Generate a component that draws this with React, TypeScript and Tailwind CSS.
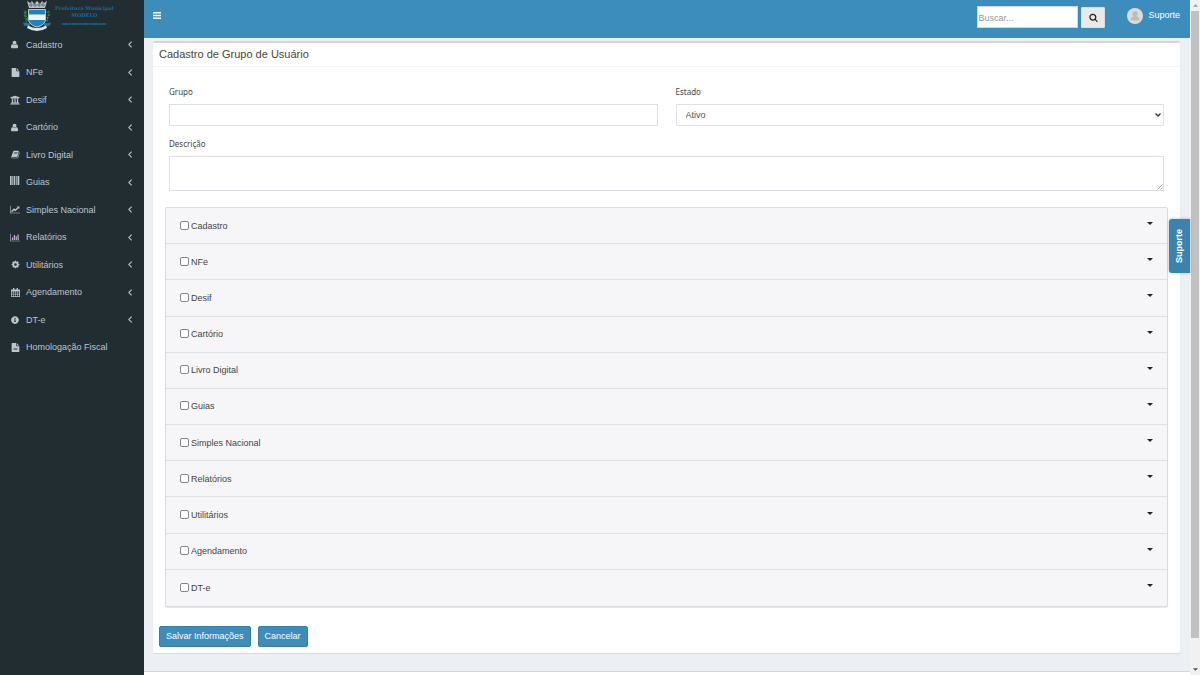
import type { ReactNode } from "react";
import { FaInfoCircle, FaUniversity } from "react-icons/fa";

const FA = {
  user: "M1408 1405q0 120-73 189.5t-194 69.5h-874q-121 0-194-69.5t-73-189.5q0-53 3.5-103.5t14-109 26.5-108.5 43-97.5 62-81 85.5-53.5 111.5-20q9 0 42 21.5t74.5 48 108 48 133.5 21.5 133.5-21.5 108-48 74.5-48 42-21.5q61 0 111.5 20t85.5 53.5 62 81 43 97.5 26.5 108.5 14 109 3.5 103.5zm-320-893q0 159-112.5 271.5t-271.5 112.5-271.5-112.5-112.5-271.5 112.5-271.5 271.5-112.5 271.5 112.5 112.5 271.5z",
  file: "M1152 512v-472q22 14 36 28l408 408q14 14 28 36h-472zm-128 32q0 40 28 68t68 28h544v1056q0 40-28 68t-68 28h-1344q-40 0-68-28t-28-68v-1600q0-40 28-68t68-28h800v544z",
  fileText:
    "M1596 476q14 14 28 36h-472v-472q22 14 36 28zm-476 164h544v1056q0 40-28 68t-68 28h-1344q-40 0-68-28t-28-68v-1600q0-40 28-68t68-28h800v544q0 40 28 68t68 28zm160 736v-64q0-14-9-23t-23-9h-704q-14 0-23 9t-9 23v64q0 14 9 23t23 9h704q14 0 23-9t9-23zm0-256v-64q0-14-9-23t-23-9h-704q-14 0-23 9t-9 23v64q0 14 9 23t23 9h704q14 0 23-9t9-23z",
  book: "M1703 478q40 57 18 129l-275 906q-19 64-76.5 107.5t-122.5 43.5h-923q-77 0-148.5-53.5t-99.5-131.5q-24-67-2-127 0-4 3-27t4-37q1-8-3-21.5t-3-19.5q2-11 8-21t16.5-23.5 16.5-23.5q23-38 45-91.5t30-91.5q3-10 .5-30t-.5-28q3-11 17-28t17-23q21-36 42-92t25-90q1-9-2.5-32t.5-28q4-13 22-30.5t22-22.5q19-26 42.5-84.5t27.5-96.5q1-8-3-25.5t-2-26.5q2-8 9-18t18-23 17-21q8-12 16.5-30.5t15-35 16-36 19.5-32 26.5-23.5 36-11.5 47.5 5.5l-1 3q38-9 51-9h761q74 0 114 56t18 130l-274 906q-36 119-71.5 153.5t-128.5 34.5h-869q-27 0-38 15-11 16-1 43 24 70 144 70h923q29 0 56-15.5t35-41.5l300-987q7-22 5-57 38 15 59 43zm-1064 2q-4 13 2 22.5t20 9.5h608q13 0 25.5-9.5t16.5-22.5l21-64q4-13-2-22.5t-20-9.5h-608q-13 0-25.5 9.5t-16.5 22.5zm-83 256q-4 13 2 22.5t20 9.5h608q13 0 25.5-9.5t16.5-22.5l21-64q4-13-2-22.5t-20-9.5h-608q-13 0-25.5 9.5t-16.5 22.5z",
  lineChart:
    "M2048 1536v128h-2048v-1536h128v1408h1920zm-128-1248v435q0 21-19.5 29.5t-35.5-7.5l-121-121-633 633q-10 10-23 10t-23-10l-233-233-416 416-192-192 585-585q10-10 23-10t23 10l233 233 464-464-121-121q-16-16-7.5-35.5t29.5-19.5h435q14 0 23 9t9 23z",
  barChart:
    "M640 896v512h-256v-512h256zm384-512v1024h-256v-1024h256zm1024 1152v128h-2048v-1536h128v1408h1920zm-640-896v768h-256v-768h256zm384-384v1152h-256v-1152h256z",
  cog: "M1152 896q0-106-75-181t-181-75-181 75-75 181 75 181 181 75 181-75 75-181zm512-109v222q0 12-8 23t-20 13l-185 28q-19 54-39 91 35 50 107 138 10 12 10 25t-9 23q-27 37-99 108t-94 71q-12 0-26-9l-138-108q-44 23-91 38-16 136-29 186-7 28-36 28h-222q-14 0-24.5-8.5t-11.5-21.5l-28-184q-49-16-90-37l-141 107q-10 9-25 9-14 0-25-11-126-114-165-168-7-10-7-23 0-12 8-23 15-21 51-66.5t54-70.5q-27-50-41-99l-183-27q-13-2-21-12.5t-8-23.5v-222q0-12 8-23t19-13l186-28q14-46 39-92-40-57-107-138-10-12-10-24 0-10 9-23 26-36 98.5-107.5t94.5-71.5q13 0 26 10l138 107q44-23 91-38 16-136 29-186 7-28 36-28h222q14 0 24.5 8.5t11.5 21.5l28 184q49 16 90 37l142-107q9-9 24-9 13 0 25 10 129 119 165 170 7 8 7 22 0 12-8 23-15 21-51 66.5t-54 70.5q26 50 41 98l183 28q13 2 21 12.5t8 23.5z",
  search:
    "M1216 832q0-185-131.5-316.5t-316.5-131.5-316.5 131.5-131.5 316.5 131.5 316.5 316.5 131.5 316.5-131.5 131.5-316.5zm512 832q0 52-38 90t-90 38q-54 0-90-38l-343-342q-179 124-399 124-143 0-273.5-55.5t-225-150-150-225-55.5-273.5 55.5-273.5 150-225 225-150 273.5-55.5 273.5 55.5 225 150 150 225 55.5 273.5q0 220-124 399l343 343q37 37 37 90z",
  angleLeft:
    "M1203 544q0 13-10 23l-393 393 393 393q10 10 10 23t-10 23l-50 50q-10 10-23 10t-23-10l-466-466q-10-10-10-23t10-23l466-466q10-10 23-10t23 10l50 50q10 10 10 23z",
};

function Icon({ d, box = "0 0 1792 1792", className = "h-[9px]" }: { d: string; box?: string; className?: string }) {
  return (
    <svg viewBox={box} className={className} fill="currentColor" aria-hidden="true">
      <path d={d} />
    </svg>
  );
}

const Barcode = () => (
  <svg viewBox="0 0 10 9" className="mb-1 h-[9px] w-[10px]" fill="currentColor" aria-hidden="true">
    <path d="M0 0h1.600v9H0zM2.200 0h.7v9h-.7zM3.600 0h1.600v9H3.600zM5.900 0h.8v9h-.8zM7.500 0h1.800v9H7.500z" />
  </svg>
);

const Calendar = () => (
  <svg viewBox="0 0 18 18" className="h-[9px] w-[9px]" fill="currentColor" aria-hidden="true">
    <path
      fillRule="evenodd"
      d="M1 3h3V1q0-1 1-1h1q1 0 1 1v2h4V1q0-1 1-1h1q1 0 1 1v2h3q1 0 1 1v13q0 1-1 1H1q-1 0-1-1V4q0-1 1-1zM1.400 7v2.600h3V7zM5.400 7v2.600h3V7zM9.400 7v2.600h3V7zM13.400 7v2.600h3V7zM1.400 10.600v2.600h3v-2.600zM5.400 10.600v2.600h3v-2.600zM9.400 10.600v2.600h3v-2.600zM13.400 10.600v2.600h3v-2.600zM1.400 14.200v2.400h3v-2.400zM5.400 14.200v2.400h3v-2.400zM9.400 14.200v2.400h3v-2.400zM13.400 14.200v2.400h3v-2.400z"
    />
  </svg>
);

const menu: { label: string; icon: ReactNode; leaf?: boolean }[] = [
  { label: "Cadastro", icon: <Icon d={FA.user} box="0 0 1408 1792" /> },
  { label: "NFe", icon: <Icon d={FA.file} /> },
  { label: "Desif", icon: <FaUniversity size={10} /> },
  { label: "Cartório", icon: <Icon d={FA.user} box="0 0 1408 1792" /> },
  { label: "Livro Digital", icon: <Icon d={FA.book} /> },
  { label: "Guias", icon: <Barcode /> },
  { label: "Simples Nacional", icon: <Icon d={FA.lineChart} box="0 0 2048 1792" /> },
  { label: "Relatórios", icon: <Icon d={FA.barChart} box="0 0 2048 1792" className="h-[9px] text-[#c3a9cf]" /> },
  { label: "Utilitários", icon: <Icon d={FA.cog} /> },
  { label: "Agendamento", icon: <Calendar /> },
  { label: "DT-e", icon: <FaInfoCircle size={8} /> },
  { label: "Homologação Fiscal", icon: <Icon d={FA.fileText} />, leaf: true },
];

const modules = [
  "Cadastro",
  "NFe",
  "Desif",
  "Cartório",
  "Livro Digital",
  "Guias",
  "Simples Nacional",
  "Relatórios",
  "Utilitários",
  "Agendamento",
  "DT-e",
];

function Crest() {
  return (
    <svg viewBox="0 0 28 32" className="h-8 w-7 shrink-0" aria-hidden="true">
      <path d="M4 1l2 7h16l2-7-3 2-2-2-2 3-3-3-3 3-2-3-2 2z" fill="#b9bfc1" />
      <path d="M6 5h16M8 2v5M12 2v5M16 2v5M20 2v5" stroke="#4c565b" strokeWidth=".7" />
      <path d="M3 11q-2 3 0 6t0 5" stroke="#23803f" strokeWidth="2.600" fill="none" strokeDasharray="3 .6" />
      <path d="M25 11q2 3 0 6t0 5" stroke="#2c7440" strokeWidth="2" fill="none" strokeDasharray="2 1" />
      <path d="M24 12q2 3 0 8" stroke="#a3713f" strokeWidth="1" fill="none" strokeDasharray="1 2" />
      <path d="M0 22.500l7 1v3l-6-1zM28 22.500l-7 1v3l6-1z" fill="#1b75b5" />
      <path d="M5.500 9.500h17V19q0 6-8.500 8-8.500-2-8.500-8z" fill="#2481bd" stroke="#c5d6df" strokeWidth=".9" />
      <path d="M6 14.500h16v5.500H6z" fill="#eef4f8" />
      <path d="M5 25.500q9 5 18 0l1 2.500q-10 6-20 0z" fill="#dfe5e8" />
    </svg>
  );
}

function Sidebar() {
  return (
    <aside className="w-36 shrink-0 bg-[#222d32] text-[#b8c7ce]">
      <a href="#inicio" className="flex h-[31px] items-start gap-1 pl-[23px]">
        <Crest />
        <span className="flex flex-col items-center pt-[5px] font-['DejaVu_Serif',serif] text-[5px] font-bold leading-[7px] text-[#136a9c]">
          <span className="whitespace-nowrap">Prefeitura Municipal</span>
          <span>MODELO</span>
          <svg viewBox="0 0 44 2" className="mt-1 h-[2px] w-11" aria-hidden="true">
            <path d="M0 1h44" stroke="#136a9c" strokeWidth="1.400" strokeDasharray="6 .5 3 .5" />
          </svg>
        </span>
      </a>
      <nav className="grid h-[330px] auto-rows-fr">
        {menu.map((m) => (
          <a key={m.label} href="#menu" className="flex items-center pl-[10px] pr-3 text-[9px] leading-3">
            <span className="flex w-[10px] shrink-0 items-center justify-center">{m.icon}</span>
            <span className="ml-[6px] grow">{m.label}</span>
            {!m.leaf && <Icon d={FA.angleLeft} box="560 380 680 1160" className="h-[7px] w-1 stroke-current [stroke-width:60]" />}
          </a>
        ))}
      </nav>
    </aside>
  );
}

function Header() {
  return (
    <header className="flex h-[38px] shrink-0 items-start justify-between bg-[#3c8dbc] pl-[9px] pr-[10px] text-white">
      <button aria-label="Alternar menu" className="mt-3">
        <svg viewBox="0 0 8 7" className="h-[7px] w-2" fill="currentColor" aria-hidden="true">
          <path d="M0 0h8v1.400H0zM0 2.800h8v1.400H0zM0 5.600h8v1.400H0z" />
        </svg>
      </button>
      <div className="flex pt-[6px]">
        <input
          aria-label="Buscar"
          placeholder="Buscar..."
          className="mr-[3px] h-[22px] w-[101px] border border-[#c9d9e4] bg-white pt-px text-[9px] text-[#555] placeholder:text-[#999]"
        />
        <button
          aria-label="Pesquisar"
          className="mt-px flex h-[21px] w-6 items-center justify-center rounded-[1px] border border-[#ddd] bg-[#e9e9e9] text-[#222]"
        >
          <Icon d={FA.search} className="h-[9px] w-[9px]" />
        </button>
        <a href="#perfil" className="ml-[22px] flex h-5 items-center gap-[5px] text-[9px]">
          <svg viewBox="0 0 16 16" className="h-4 w-4" aria-hidden="true">
            <circle cx="8" cy="8" r="8" fill="#dcdcdc" />
            <circle cx="8" cy="5.700" r="2.600" fill="#bdbdbd" />
            <path d="M3.500 12.500q0-4.500 4.500-4.500t4.500 4.500z" fill="#bdbdbd" />
          </svg>
          Suporte
        </a>
      </div>
    </header>
  );
}

const label = "block font-['Noto_Sans',sans-serif] text-[8px] leading-3 text-[#444]";
const field = "w-full border border-[#dcdfe6] bg-white px-[9px] text-[9px] text-[#555]";
const primary = "h-[21px] rounded-[2px] border border-[#367fa9] bg-[#3c8dbc] px-[6px] text-[9px] text-white";

function GroupForm() {
  return (
    <form className="rounded-[2px] border-t-2 border-[#d2d6de] bg-white pb-[6px] shadow-[0_1px_1px_rgba(0,0,0,0.1)]">
      <h1 className="border-b border-[#f4f4f4] px-[6px] pb-1 pt-[3px] text-[11px] leading-4 text-[#444]">
        Cadastro de Grupo de Usuário
      </h1>
      <div className="px-4 pt-[19px]">
        <div className="grid grid-cols-2 gap-[18px]">
          <div>
            <label htmlFor="grupo" className={label}>
              Grupo
            </label>
            <input id="grupo" className={`${field} mt-[6px] block h-[22px]`} />
          </div>
          <div>
            <label htmlFor="estado" className={label}>
              Estado
            </label>
            <div className="relative mt-[6px]">
              <select id="estado" className={`${field} block h-[22px] appearance-none pt-px`}>
                <option>Ativo</option>
                <option>Inativo</option>
              </select>
              <svg viewBox="0 0 6 4" className="pointer-events-none absolute right-[3px] top-[9px] h-1 w-[6px]" aria-hidden="true">
                <path d="M.5 .5L3 3 5.500 .5" fill="none" stroke="#333" strokeWidth="1.300" />
              </svg>
            </div>
          </div>
        </div>
        <label htmlFor="descricao" className={`${label} mt-3`}>
          Descrição
        </label>
        <div className="relative mt-[6px]">
          <textarea id="descricao" className={`${field} block h-[35px] resize-none`} />
          <svg viewBox="0 0 6 6" className="pointer-events-none absolute bottom-px right-px h-[6px] w-[6px]" aria-hidden="true">
            <path d="M.5 5.500l5-5M3.500 5.500l2-2" stroke="#888" strokeWidth=".8" />
          </svg>
        </div>
      </div>
      <ul className="mx-3 mt-4 grid h-[400px] auto-rows-fr rounded-[2px] border border-[#d9dbdf] bg-[#f6f6f9] shadow-[0_1px_1px_rgba(0,0,0,0.1)]">
        {modules.map((m) => (
          <li key={m} className="flex items-center justify-between border-b border-[#dfe0e3] px-[14px] last:border-b-0">
            <label className="flex items-center gap-[2px] text-[9px] leading-3 text-[#444]">
              <input
                type="checkbox"
                className="mb-px h-[9px] w-[9px] appearance-none rounded-[2px] border border-[#858585] bg-white checked:bg-[#3c8dbc]"
              />
              {m}
            </label>
            <button type="button" aria-label={`Expandir ${m}`} className="mb-1">
              <svg viewBox="0 0 6 3" className="block h-[3px] w-[6px]" aria-hidden="true">
                <path d="M0 0h6L3 3z" fill="#222" />
              </svg>
            </button>
          </li>
        ))}
      </ul>
      <div className="mt-[19px] flex gap-[7px] px-[6px]">
        <button type="submit" className={primary}>
          Salvar Informações
        </button>
        <button type="button" className={primary}>
          Cancelar
        </button>
      </div>
    </form>
  );
}

function ScrollRail() {
  return (
    <div className="flex w-[10px] shrink-0 flex-col items-center bg-[#f1f1f1] py-1" aria-hidden="true">
      <svg viewBox="0 0 6 3" className="mb-1 h-[3px] w-[5px]">
        <path d="M0 3h6L3 0z" fill="#9a9a9a" />
      </svg>
      <div className="mb-[30px] w-2 grow bg-[#c1c1c1]" />
      <svg viewBox="0 0 6 3" className="h-[3px] w-[5px]">
        <path d="M0 0h6L3 3z" fill="#505050" />
      </svg>
    </div>
  );
}

export default function App() {
  return (
    <div className="flex min-h-screen bg-[#ecf0f5] font-['Liberation_Sans',Arial,sans-serif]">
      <Sidebar />
      <div className="relative flex min-w-0 grow flex-col">
        <Header />
        <main className="grow pl-[9px] pr-[10px] pt-[3px]">
          <GroupForm />
        </main>
        <footer className="h-1 border-t border-[#d2d6de] bg-white" />
        <button className="absolute right-0 top-[219px] flex h-[54px] w-[21px] items-center justify-center rounded-l-[3px] bg-[#3983b0] text-[9px] font-bold text-white shadow-[0_0_3px_rgba(0,0,0,0.3)]">
          <span className="rotate-180 [writing-mode:vertical-rl]">Suporte</span>
        </button>
      </div>
      <ScrollRail />
    </div>
  );
}
